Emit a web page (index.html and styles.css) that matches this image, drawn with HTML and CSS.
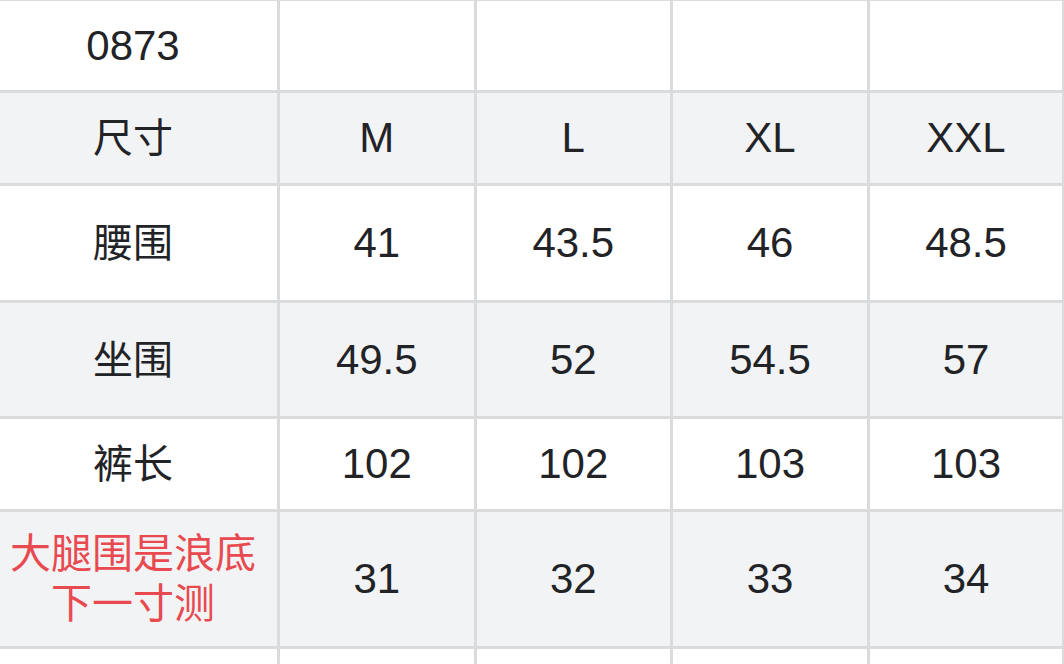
FILE: index.html
```html
<!DOCTYPE html>
<html lang="zh">
<head>
<meta charset="utf-8">
<title>0873 尺寸表</title>
<link rel="stylesheet" href="styles.css">
</head>
<body>
<div class="sheet">
  <div class="row h89 white">
    <div class="cell first code">0873</div>
    <div class="cell"></div>
    <div class="cell"></div>
    <div class="cell"></div>
    <div class="cell"></div>
  </div>
  <div class="row h90 gray">
    <div class="cell first">尺寸</div>
    <div class="cell">M</div>
    <div class="cell">L</div>
    <div class="cell">XL</div>
    <div class="cell">XXL</div>
  </div>
  <div class="row h114 white">
    <div class="cell first">腰围</div>
    <div class="cell">41</div>
    <div class="cell">43.5</div>
    <div class="cell">46</div>
    <div class="cell">48.5</div>
  </div>
  <div class="row h113 gray">
    <div class="cell first">坐围</div>
    <div class="cell">49.5</div>
    <div class="cell">52</div>
    <div class="cell">54.5</div>
    <div class="cell">57</div>
  </div>
  <div class="row h90 white">
    <div class="cell first">裤长</div>
    <div class="cell">102</div>
    <div class="cell">102</div>
    <div class="cell">103</div>
    <div class="cell">103</div>
  </div>
  <div class="row h134 gray">
    <div class="cell first note">大腿围是浪底<br>下一寸测</div>
    <div class="cell">31</div>
    <div class="cell">32</div>
    <div class="cell">33</div>
    <div class="cell">34</div>
  </div>
  <div class="row tail white">
    <div class="cell first"></div>
    <div class="cell"></div>
    <div class="cell"></div>
    <div class="cell"></div>
    <div class="cell"></div>
  </div>
</div>
</body>
</html>
```

FILE: styles.css
```css
html, body {
  margin: 0;
  padding: 0;
  background: #ffffff;
}

body {
  width: 1064px;
  height: 664px;
  overflow: hidden;
  font-family: "Liberation Sans", "Noto Sans CJK SC", sans-serif;
  font-size: 42px;
  color: #222326;
}

.sheet {
  display: flex;
  flex-direction: column;
  gap: 3px;
  padding: 1px 2px 0 0;
  background: #dadbdd;
  width: 1064px;
  height: 664px;
  box-sizing: border-box;
}

.row {
  display: grid;
  grid-template-columns: 277px 193.5px 193.5px 194px 192px;
  column-gap: 3px;
}

.h89 { height: 89px; }
.h90 { height: 90px; }
.h113 { height: 113px; }
.h114 { height: 114px; }
.h134 { height: 134px; }
.tail { flex: 1; }

.white .cell { background: #ffffff; }
.gray .cell { background: #f2f3f5; }

.cell {
  display: flex;
  align-items: center;
  justify-content: center;
  text-align: center;
  line-height: 1;
}

.first {
  padding-right: 11px;
  font-size: 40px;
}

.first.code {
  font-size: 42px;
}

.note {
  color: #e84a50;
  line-height: 50px;
  font-size: 41px;
}
```
